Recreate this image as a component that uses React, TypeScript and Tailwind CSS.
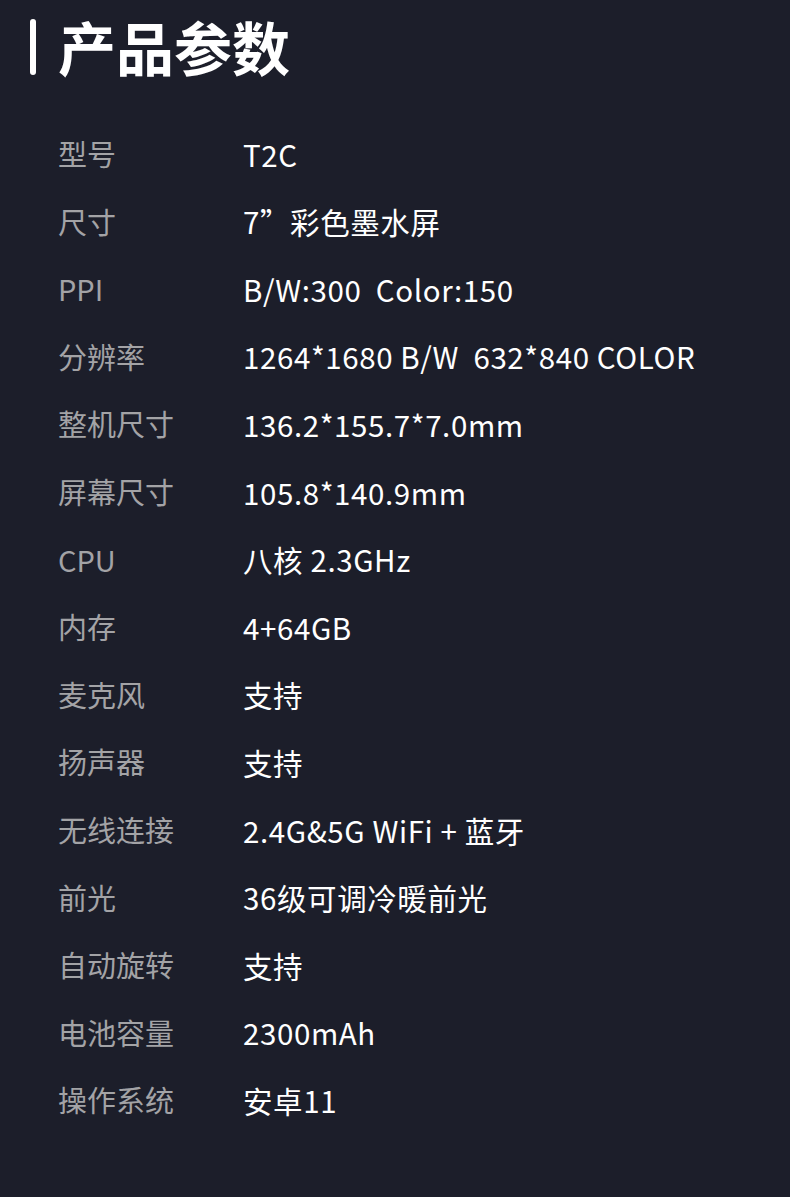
const specs: [string, string][] = [
  ["型号", "T2C"],
  ["尺寸", "7”彩色墨水屏"],
  ["PPI", "B/W:300  Color:150"],
  ["分辨率", "1264*1680 B/W  632*840 COLOR"],
  ["整机尺寸", "136.2*155.7*7.0mm"],
  ["屏幕尺寸", "105.8*140.9mm"],
  ["CPU", "八核 2.3GHz"],
  ["内存", "4+64GB"],
  ["麦克风", "支持"],
  ["扬声器", "支持"],
  ["无线连接", "2.4G&5G WiFi + 蓝牙"],
  ["前光", "36级可调冷暖前光"],
  ["自动旋转", "支持"],
  ["电池容量", "2300mAh"],
  ["操作系统", "安卓11"],
]

export default function App() {
  return (
    <div
      className="w-[790px] h-[1197px] bg-[#1c1e2a] overflow-hidden"
      style={{ fontFamily: '"Noto Sans CJK SC", "Noto Sans", sans-serif' }}
    >
      <div className="flex items-center h-[94px] pl-[30px]">
        <div className="w-[6px] h-[56px] rounded-full bg-white" />
        <h1 className="ml-[22px] -mt-[2px] text-[58px] leading-none font-bold text-white">产品参数</h1>
      </div>
      <div className="pt-[26px] pl-[58px]">
        {specs.map(([label, value]) => (
          <div key={label} className="flex items-center h-[67.6px] whitespace-pre">
            <div className="w-[185px] text-[29px] text-[#a3a3a6]">{label}</div>
            <div className="text-[29.5px] text-white font-normal tracking-[0.6px]">{value}</div>
          </div>
        ))}
      </div>
    </div>
  )
}
